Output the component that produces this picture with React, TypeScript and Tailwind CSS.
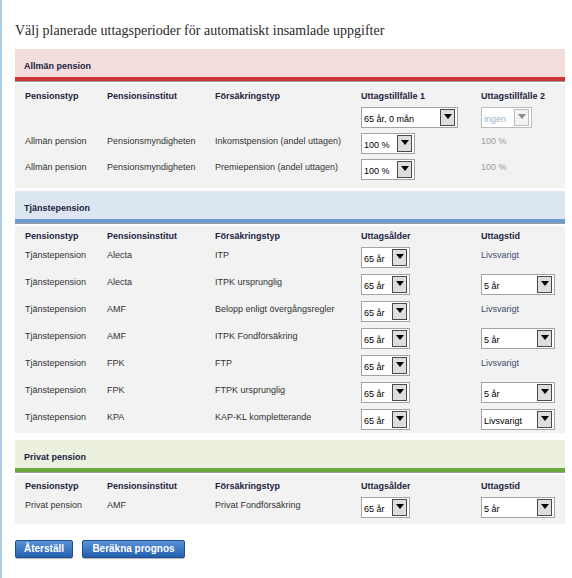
import React from "react"

const COLS = "grid grid-cols-[82px_108px_146px_120px_1fr] pl-[10px]"

// Tjänstepension rows
const TJANST = [
  { inst: "Alecta", typ: "ITP", tid: "text" },
  { inst: "Alecta", typ: "ITPK ursprunglig", tid: "5 år" },
  { inst: "AMF", typ: "Belopp enligt övergångsregler", tid: "text" },
  { inst: "AMF", typ: "ITPK Fondförsäkring", tid: "5 år" },
  { inst: "FPK", typ: "FTP", tid: "text" },
  { inst: "FPK", typ: "FTPK ursprunglig", tid: "5 år" },
  { inst: "KPA", typ: "KAP-KL kompletterande", tid: "Livsvarigt" },
]

function Select({ value, w, disabled }: { value: string; w: string; disabled?: boolean }) {
  return (
    <div
      className={`${w} flex h-[21px] items-center justify-between border bg-white pl-[2px] pr-[2px] ${
        disabled ? "border-[#bcbcbc] text-[#9db0c8]" : "border-[#a3a3a3] text-black"
      }`}
    >
      <span className="pt-[3px]">{value}</span>
      <span
        className={`flex h-[17px] w-[15px] items-start justify-center border pt-[4px] ${
          disabled ? "border-[#bdbdbd] bg-[#f3f3f3]" : "border-[#4a4a4a] bg-[#dedede]"
        }`}
      >
        <span
          className={`h-0 w-0 border-l-[4px] border-r-[4px] border-t-[5px] border-l-transparent border-r-transparent ${
            disabled ? "border-t-[#8a8a8a]" : "border-t-black"
          }`}
        />
      </span>
    </div>
  )
}

function SectionHead({ title, band, bar }: { title: string; band: string; bar: string }) {
  return (
    <div>
      <div className={`h-[28px] pl-[9px] pt-[12px] font-bold text-[#1c2340] ${band}`}>{title}</div>
      <div className={`h-[4px] ${bar}`} />
      <div className="h-px bg-[#9a9a9a]" />
      <div className="h-[2px] bg-white" />
    </div>
  )
}

function HeadRow({ c4, c5 }: { c4: string; c5: string }) {
  return (
    <div className={`${COLS} h-[22px] items-center font-bold text-[#1c2340]`}>
      <div>Pensionstyp</div>
      <div>Pensionsinstitut</div>
      <div>Försäkringstyp</div>
      <div>{c4}</div>
      <div>{c5}</div>
    </div>
  )
}

export default function App() {
  return (
    <div className="min-h-[578px] w-[572px] border-l-2 border-[#aacdea] bg-white pl-[13px] font-['Liberation_Sans',Arial,sans-serif] text-[9px] leading-[11px] text-[#333]">
      <h1 className="mb-[10px] pt-[23px] font-['Liberation_Serif','Times_New_Roman',serif] text-[14px] leading-[16px] font-normal text-[#2a2a2a]">
        Välj planerade uttagsperioder för automatiskt insamlade uppgifter
      </h1>

      <div className="w-[550px]">
        {/* Allmän pension */}
        <SectionHead title="Allmän pension" band="bg-[#f2dcdc]" bar="bg-[#cc3333]" />
        <div className="bg-[#f2f2f2] pb-[8px] pt-px">
          <HeadRow c4="Uttagstillfälle 1" c5="Uttagstillfälle 2" />
          <div className="flex flex-col gap-[5px]">
            <div className={`${COLS} h-[21px]`}>
              <div />
              <div />
              <div />
              <Select value="65 år, 0 mån" w="w-[97px]" />
              <Select value="ingen" w="w-[51px]" disabled />
            </div>
            {["Inkomstpension (andel uttagen)", "Premiepension (andel uttagen)"].map((t) => (
              <div key={t} className={`${COLS} h-[21px] items-start`}>
                <div className="pt-[3px]">Allmän pension</div>
                <div className="pt-[3px]">Pensionsmyndigheten</div>
                <div className="pt-[3px]">{t}</div>
                <Select value="100 %" w="w-[54px]" />
                <div className="pt-[3px] text-[#9a9a9a]">100 %</div>
              </div>
            ))}
          </div>
        </div>

        {/* Tjänstepension */}
        <div className="mt-[3px]">
          <SectionHead title="Tjänstepension" band="bg-[#dce6f1]" bar="bg-[#6c9bd2]" />
        </div>
        <div className="bg-[#f2f2f2] pb-[3px]">
          <div className="h-px" />
          <div className="-mt-px">
            <div className={`${COLS} h-[21px] items-center font-bold text-[#1c2340]`}>
              <div>Pensionstyp</div>
              <div>Pensionsinstitut</div>
              <div>Försäkringstyp</div>
              <div>Uttagsålder</div>
              <div>Uttagstid</div>
            </div>
          </div>
          <div className="flex flex-col gap-[6px]">
            {TJANST.map((r, i) => (
              <div key={i} className={`${COLS} h-[21px] items-start`}>
                <div className="pt-[3px]">Tjänstepension</div>
                <div className="pt-[3px]">{r.inst}</div>
                <div className="pt-[3px]">{r.typ}</div>
                <Select value="65 år" w="w-[49px]" />
                {r.tid === "text" ? (
                  <div className="pt-[3px] text-[#3f4c6e]">Livsvarigt</div>
                ) : (
                  <Select value={r.tid} w="w-[74px]" />
                )}
              </div>
            ))}
          </div>
        </div>

        {/* Privat pension */}
        <div className="mt-[7px]">
          <SectionHead title="Privat pension" band="bg-[#ebf1de]" bar="bg-[#69a83c]" />
        </div>
        <div className="bg-[#f2f2f2] pb-[6px]">
          <HeadRow c4="Uttagsålder" c5="Uttagstid" />
          <div className={`${COLS} h-[21px] items-start`}>
            <div className="pt-[3px]">Privat pension</div>
            <div className="pt-[3px]">AMF</div>
            <div className="pt-[3px]">Privat Fondförsäkring</div>
            <Select value="65 år" w="w-[49px]" />
            <Select value="5 år" w="w-[74px]" />
          </div>
        </div>

        <div className="mt-[16px] flex gap-[9px]">
          <button className="h-[18px] w-[58px] rounded-[2px] border border-[#1d4f8f] bg-gradient-to-b from-[#5a93d8] to-[#2360ad] text-[10px] font-bold leading-[16px] text-white shadow-[0_1px_1px_rgba(0,0,0,0.3)]">
            Återställ
          </button>
          <button className="h-[18px] w-[103px] rounded-[2px] border border-[#1d4f8f] bg-gradient-to-b from-[#5a93d8] to-[#2360ad] text-[10px] font-bold leading-[16px] text-white shadow-[0_1px_1px_rgba(0,0,0,0.3)]">
            Beräkna prognos
          </button>
        </div>
      </div>
    </div>
  )
}
